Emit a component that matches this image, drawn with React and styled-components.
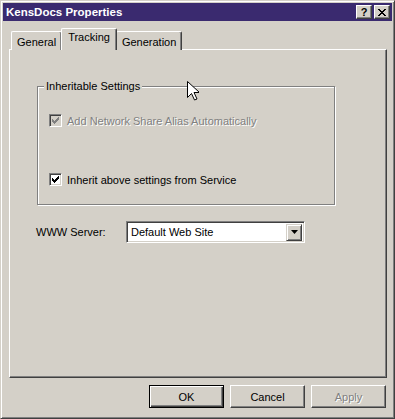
import React from "react";
import styled, { createGlobalStyle } from "styled-components";

const GlobalStyle = createGlobalStyle`
  html, body {
    margin: 0;
    padding: 0;
    background: #d4d0c8;
  }
  body {
    font-family: "Liberation Sans", Arial, sans-serif;
    font-size: 11px;
    color: #000;
  }
`;

const Window = styled.div`
  position: relative;
  box-sizing: border-box;
  width: 395px;
  height: 419px;
  padding: 2px;
  background: #d4d0c8;
  border: 1px solid;
  border-color: #d4d0c8 #404040 #404040 #d4d0c8;
  box-shadow: inset 1px 1px #fff, inset -1px -1px #808080;
  display: flex;
  flex-direction: column;
`;

const TitleBar = styled.div`
  height: 18px;
  background: #3a2a6f;
  display: flex;
  align-items: center;
  padding: 0 2px 0 3px;
  color: #fff;
  font-weight: bold;
  font-size: 11.5px;
  font-family: "Liberation Sans", Arial, sans-serif;
`;

const Title = styled.span`
  flex: 1;
`;

const TitleButton = styled.div`
  box-sizing: border-box;
  width: 16px;
  height: 14px;
  margin-left: 2px;
  background: #d4d0c8;
  border: 1px solid;
  border-color: #fff #404040 #404040 #fff;
  box-shadow: inset -1px -1px #808080;
  display: flex;
  align-items: center;
  justify-content: center;
  color: #000;
  font-size: 11px;
  font-weight: bold;
  line-height: 1;
`;

const Body = styled.div`
  flex: 1;
  display: flex;
  flex-direction: column;
  padding: 7px 5px 0 6px;
`;

const TabRow = styled.div`
  display: flex;
  align-items: flex-end;
  height: 22px;
  padding-left: 2px;
  position: relative;
  z-index: 1;
  margin-bottom: -1px;
`;

const Tab = styled.div`
  box-sizing: border-box;
  height: ${(p) => (p.$active ? "22px" : "19px")};
  margin: ${(p) => (p.$active ? "0 -1px 0 -1px" : "0")};
  padding: ${(p) => (p.$active ? "1px 6px 0" : "3px 5px 0")};
  background: #d4d0c8;
  border-top: 1px solid #fff;
  border-left: 1px solid #fff;
  border-right: 1px solid #404040;
  border-top-left-radius: 2px;
  border-top-right-radius: 2px;
  box-shadow: inset -1px 0 #808080;
  font-size: 11px;
  line-height: 15px;
  ${(p) => (p.$active ? "z-index: 2;" : "")}
`;

const Panel = styled.div`
  position: relative;
  box-sizing: border-box;
  height: 329px;
  border: 1px solid;
  border-color: #fff #404040 #404040 #fff;
  box-shadow: inset -1px -1px #808080;
  padding: 36px 0 0 27px;
`;

const GroupBox = styled.div`
  position: relative;
  box-sizing: border-box;
  width: 298px;
  height: 119px;
  border: 1px solid #808080;
  box-shadow: inset 1px 1px #fff, 1px 1px #fff;
  padding: 27px 0 0 11px;
  display: flex;
  flex-direction: column;
  gap: 46px;
`;

const GroupLabel = styled.span`
  position: absolute;
  top: -8px;
  left: 6px;
  padding: 0 2px;
  background: #d4d0c8;
  font-size: 11px;
  line-height: 15px;
`;

const CheckRow = styled.label`
  display: flex;
  align-items: center;
  gap: 5px;
  font-size: 11px;
  color: ${(p) => (p.$disabled ? "#808080" : "#000")};
  text-shadow: ${(p) => (p.$disabled ? "1px 1px 0 #fff" : "none")};
`;

const Box = styled.span`
  box-sizing: border-box;
  width: 13px;
  height: 13px;
  background: ${(p) => (p.$disabled ? "#d4d0c8" : "#fff")};
  border: 1px solid;
  border-color: #808080 #fff #fff #808080;
  box-shadow: inset 1px 1px #404040, inset -1px -1px #d4d0c8;
  display: flex;
  align-items: center;
  justify-content: center;
`;

const ServerRow = styled.div`
  display: flex;
  align-items: center;
  margin-top: 16px;
  margin-left: -1px;
`;

const ServerLabel = styled.span`
  width: 90px;
  font-size: 11px;
`;

const Select = styled.div`
  box-sizing: border-box;
  width: 179px;
  height: 22px;
  background: #fff;
  border: 1px solid;
  border-color: #808080 #fff #fff #808080;
  box-shadow: inset 1px 1px #404040, inset -1px -1px #d4d0c8;
  display: flex;
  align-items: center;
  padding: 2px 2px 2px 4px;
  font-size: 11px;
`;

const SelectText = styled.span`
  flex: 1;
`;

const DropButton = styled.span`
  box-sizing: border-box;
  width: 16px;
  height: 17px;
  background: #d4d0c8;
  border: 1px solid;
  border-color: #d4d0c8 #404040 #404040 #d4d0c8;
  box-shadow: inset 1px 1px #fff, inset -1px -1px #808080;
  display: flex;
  align-items: center;
  justify-content: center;
`;

const ButtonRow = styled.div`
  display: flex;
  justify-content: flex-end;
  gap: 6px;
  margin-top: 7px;
  padding-right: 1px;
`;

const Button = styled.div`
  box-sizing: border-box;
  width: 75px;
  height: 23px;
  background: #d4d0c8;
  border: 1px solid;
  border-color: ${(p) => (p.$default ? "#000" : "#fff #404040 #404040 #fff")};
  box-shadow: ${(p) =>
    p.$default
      ? "inset 1px 1px #fff, inset -1px -1px #404040, inset -2px -2px #808080"
      : "inset -1px -1px #808080"};
  display: flex;
  align-items: center;
  justify-content: center;
  font-size: 11px;
  color: ${(p) => (p.$disabled ? "#808080" : "#000")};
  text-shadow: ${(p) => (p.$disabled ? "1px 1px 0 #fff" : "none")};
`;

const Cursor = styled.svg`
  position: absolute;
  left: 186px;
  top: 80px;
`;

function Check({ color }) {
  return (
    <svg width="7" height="7" viewBox="0 0 7 7">
      <path
        d="M0 2h1v1h1v1h1v-1h1v-1h1v-1h1v-1h1v3h-1v1h-1v1h-1v1h-1v1h-1v-1h-1v-1h-1z"
        fill={color}
        shapeRendering="crispEdges"
      />
    </svg>
  );
}

function Checkbox({ label, disabled }) {
  return (
    <CheckRow $disabled={disabled}>
      <Box $disabled={disabled}>
        <Check color={disabled ? "#808080" : "#000"} />
      </Box>
      {label}
    </CheckRow>
  );
}

export default function App() {
  return (
    <>
      <GlobalStyle />
      <Window>
        <TitleBar>
          <Title>KensDocs Properties</Title>
          <TitleButton>?</TitleButton>
          <TitleButton>
            <svg width="8" height="7" viewBox="0 0 8 7">
              <path
                d="M0 0h2v1h1v1h2v-1h1v-1h2v1h-1v1h-1v1h-1v1h1v1h1v1h1v1h-2v-1h-1v-1h-2v1h-1v1h-2v-1h1v-1h1v-1h1v-1h-1v-1h-1v-1h-1z"
                fill="#000"
                shapeRendering="crispEdges"
              />
            </svg>
          </TitleButton>
        </TitleBar>
        <Body>
          <TabRow>
            <Tab>General</Tab>
            <Tab $active>Tracking</Tab>
            <Tab>Generation</Tab>
          </TabRow>
          <Panel>
            <GroupBox>
              <GroupLabel>Inheritable Settings</GroupLabel>
              <Checkbox disabled label="Add Network Share Alias Automatically" />
              <Checkbox label="Inherit above settings from Service" />
            </GroupBox>
            <ServerRow>
              <ServerLabel>WWW Server:</ServerLabel>
              <Select>
                <SelectText>Default Web Site</SelectText>
                <DropButton>
                  <svg width="7" height="4" viewBox="0 0 7 4">
                    <path d="M0 0h7l-3.5 4z" fill="#000" />
                  </svg>
                </DropButton>
              </Select>
            </ServerRow>
          </Panel>
          <ButtonRow>
            <Button $default>OK</Button>
            <Button>Cancel</Button>
            <Button $disabled>Apply</Button>
          </ButtonRow>
        </Body>
        <Cursor width="12" height="20" viewBox="0 0 12 20">
          <path
            d="M0.5 0.5v16l4-4 3 6.5 2.5-1-3-6.5h5.5z"
            fill="#fff"
            stroke="#000"
            strokeWidth="1"
          />
        </Cursor>
      </Window>
    </>
  );
}
